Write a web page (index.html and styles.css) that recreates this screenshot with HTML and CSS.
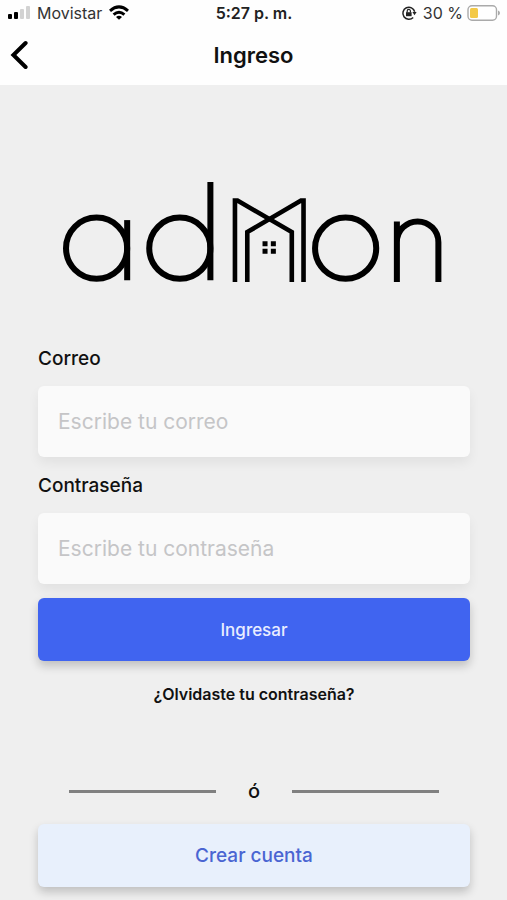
FILE: index.html
```html
<!DOCTYPE html>
<html lang="es">
<head>
<meta charset="utf-8">
<meta name="viewport" content="width=device-width, initial-scale=1">
<title>Ingreso</title>
<link rel="stylesheet" href="styles.css">
</head>
<body>
<header class="top">
  <div class="status">
    <div class="status-side">
      <svg class="signal" width="24" height="16" viewBox="0 0 24 16" aria-hidden="true">
        <rect x="0" y="9" width="4" height="5" rx="1"/>
        <rect x="6" y="7" width="4" height="7" rx="1"/>
        <rect class="dim" x="12" y="4" width="4" height="10" rx="1"/>
        <rect class="dim" x="18" y="1" width="4" height="13" rx="1"/>
      </svg>
      <span class="carrier">Movistar</span>
      <svg width="20" height="16" viewBox="0 0 20 16" fill="none" stroke="#000" stroke-width="3" aria-hidden="true">
        <path d="M1 5.800Q10-2 19 5.800"/>
        <path d="M4.600 9.600Q10 5 15.400 9.600"/>
        <path d="M7 11.900Q10 9.700 13 11.900L10 14.800z" fill="#000" stroke="none"/>
      </svg>
    </div>
    <span class="time">5:27 p. m.</span>
    <div class="status-side status-end">
      <svg class="lock" width="16" height="16" viewBox="0 0 16 16" fill="none" stroke="#222" aria-hidden="true">
        <path d="M12.200 12.400A6 6 0 1 1 13.700 6.800" stroke-width="1.500"/>
        <path d="M11.400 7.100h4.200l-2.100 3.200z" fill="#222" stroke="none"/>
        <rect x="5" y="7.200" width="5.600" height="4" fill="#222" stroke="none"/>
        <path d="M6.200 7.500V6a1.600 1.600 0 0 1 3.200 0v1.500" stroke-width="1.200"/>
      </svg>
      <span>30 %</span>
      <svg class="battery" width="33" height="16" viewBox="0 0 33 16" aria-hidden="true">
        <rect x="1" y=".8" width="28.500" height="14.400" rx="4" fill="#fff" stroke="#aaa" stroke-width="1.400"/>
        <rect x="3" y="3" width="8" height="10" rx="1.500" fill="#f3c947"/>
        <path d="M31 5.500q2 .6 2 2.500t-2 2.500z" fill="#aaa"/>
      </svg>
    </div>
  </div>
  <nav class="nav">
    <button class="back" type="button" aria-label="Volver">
      <svg width="18" height="30" viewBox="0 0 18 30" fill="none" stroke="#000" stroke-width="4" stroke-linecap="round" stroke-linejoin="miter"><path d="M15.600 3L3.400 15l12.200 12"/></svg>
    </button>
    <h1 class="title">Ingreso</h1>
  </nav>
</header>
<main class="page">
  <svg class="logo" viewBox="0 0 378 102" fill="none" stroke="#000" stroke-width="6" role="img" aria-label="admon">
    <circle cx="33.500" cy="66" r="30.500"/>
    <path d="M64 38v60"/>
    <circle cx="116.500" cy="66" r="30.500"/>
    <path d="M147 0v98"/>
    <g stroke-width="4.600">
      <path d="M171.500 99.800V18.500h2.500L228.200 50v49.800"/>
      <path d="M239.900 99.800V18.500h-2.500L183.800 50v49.800"/>
    </g>
    <path d="M199 59h5v5h-5zM207.300 59h5v5h-5zM199 66.500h5v5h-5zM207.300 66.500h5v5h-5z" fill="#000" stroke="none"/>
    <circle cx="281.900" cy="66" r="30.500"/>
    <path d="M333 39.500v60.300M333 60a20.700 20.700 0 0 1 41.400 0v39.800"/>
  </svg>
  <form class="form">
    <label class="label" for="email">Correo</label>
    <input class="field" id="email" type="email" placeholder="Escribe tu correo">
    <label class="label" for="password">Contraseña</label>
    <input class="field" id="password" type="password" placeholder="Escribe tu contraseña">
    <button class="button primary" type="submit">Ingresar</button>
  </form>
  <a class="forgot" href="#">¿Olvidaste tu contraseña?</a>
  <div class="divider"><span>ó</span></div>
  <button class="button secondary" type="button">Crear cuenta</button>
</main>
</body>
</html>
```
FILE: styles.css
```css
* { box-sizing: border-box; }

body {
  margin: 0;
  min-height: 100vh;
  background: #efefef;
  color: #111;
  font-family: Inter, "Liberation Sans", sans-serif;
}

button, input { font-family: inherit; }

.top {
  background: #fefefe;
}

.status {
  display: grid;
  grid-template-columns: 1fr auto 1fr;
  align-items: center;
  height: 25px;
  padding: 0 7px 0 8px;
  font-size: 16px;
  color: #333;
}

.status-side {
  display: flex;
  align-items: center;
  gap: 7px;
}

.status-end {
  justify-content: flex-end;
  gap: 4px;
}

.signal { margin-right: -2px; }
.signal .dim { fill: #d2d2d2; }
.lock { margin-right: 2px; }

.time {
  font-weight: 600;
  color: #222;
}

.nav {
  display: grid;
  grid-template-columns: 1fr auto 1fr;
  align-items: center;
  height: 60px;
  padding: 0 10px;
}

.back {
  display: flex;
  justify-self: start;
  padding: 0;
  border: 0;
  background: none;
}

.title {
  margin: 0;
  font-size: 22px;
  line-height: 28px;
  font-weight: 600;
}

.page {
  display: flex;
  flex-direction: column;
  padding: 97px 37px 14px 38px;
}

.logo {
  display: block;
  margin: 0 28px 0 25px;
}

.form {
  display: flex;
  flex-direction: column;
  margin-top: 63px;
}

.label {
  font-size: 19px;
  line-height: 24px;
  font-weight: 500;
  margin-bottom: 15px;
}

.field {
  width: 100%;
  height: 71px;
  margin-bottom: 17px;
  padding: 0 20px;
  border: 0;
  border-radius: 6px;
  background: #fafafa;
  box-shadow: 0 6px 12px rgba(0, 0, 0, 0.06);
  color: #222;
  font-size: 21px;
}

.field::placeholder { color: #c5c5c7; opacity: 1; }

.button {
  width: 100%;
  height: 63px;
  border: 0;
  border-radius: 6px;
  font-weight: 500;
  box-shadow: 0 5px 10px rgba(0, 0, 0, 0.2);
}

.primary {
  margin-top: -3px;
  background: #4064f0;
  color: #e9edff;
  font-size: 17px;
}

.forgot {
  align-self: center;
  margin-top: 22px;
  color: #111;
  font-size: 16px;
  line-height: 22px;
  font-weight: 600;
  text-decoration: none;
}

.divider {
  display: flex;
  align-items: center;
  gap: 32px;
  margin: 74px 31px 21px;
  font-size: 20px;
  line-height: 24px;
  font-weight: 500;
}

.divider::before,
.divider::after {
  content: "";
  flex: 1;
  height: 3px;
  background: #808080;
}

.secondary {
  background: #e8f0fc;
  color: #4a65d2;
  font-size: 19px;
}
```
